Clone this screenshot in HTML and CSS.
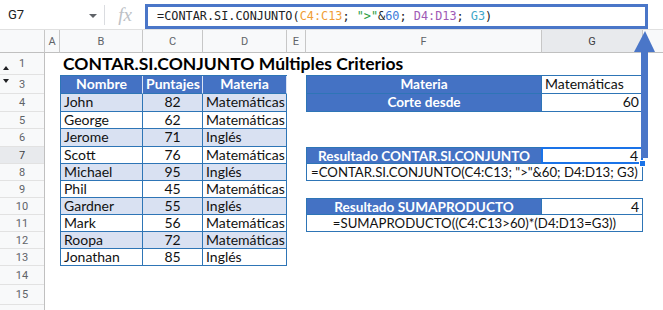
FILE: index.html
```html
<!DOCTYPE html>
<html lang="es">
<head>
    <meta charset="UTF-8">
    <title>CONTAR.SI.CONJUNTO</title>
    <link rel="stylesheet" href="styles.css">
</head>
<body>
<div class="app">
    <div class="toolbar">
        <div class="namebox">
            <span>G7</span>
            <span class="caret"></span>
        </div>
        <div class="fx">fx</div>
        <div class="formula">=CONTAR.SI.CONJUNTO(<span class="f-a">C4:C13</span>; <span class="f-s">"&gt;"</span>&amp;<span class="f-n">60</span>; <span class="f-b">D4:D13</span>; <span class="f-c">G3</span>)</div>
    </div>

    <div class="colheads">
        <div class="ch corner"></div>
        <div class="ch">A</div>
        <div class="ch">B</div>
        <div class="ch">C</div>
        <div class="ch">D</div>
        <div class="ch">E</div>
        <div class="ch">F</div>
        <div class="ch sel">G</div>
        <div class="ch rest"></div>
    </div>

    <div class="body">
        <div class="rownums">
            <div class="rn"><span class="hid up"></span>1</div>
            <div class="rn"><span class="hid down"></span>3</div>
            <div class="rn">4</div>
            <div class="rn">5</div>
            <div class="rn">6</div>
            <div class="rn sel">7</div>
            <div class="rn">8</div>
            <div class="rn">9</div>
            <div class="rn">10</div>
            <div class="rn">11</div>
            <div class="rn">12</div>
            <div class="rn">13</div>
            <div class="rn">14</div>
            <div class="rn">15</div>
            <div class="rn"></div>
        </div>

        <div class="canvas">
            <div class="title">CONTAR.SI.CONJUNTO Múltiples Criterios</div>

            <div class="data">
                <div class="hd">Nombre</div><div class="hd">Puntajes</div><div class="hd">Materia</div>
                <div class="odd">John</div><div class="odd num">82</div><div class="odd">Matemáticas</div>
                <div>George</div><div class="num">62</div><div>Matemáticas</div>
                <div class="odd">Jerome</div><div class="odd num">71</div><div class="odd">Inglés</div>
                <div>Scott</div><div class="num">76</div><div>Matemáticas</div>
                <div class="odd">Michael</div><div class="odd num">95</div><div class="odd">Inglés</div>
                <div>Phil</div><div class="num">45</div><div>Matemáticas</div>
                <div class="odd">Gardner</div><div class="odd num">55</div><div class="odd">Inglés</div>
                <div>Mark</div><div class="num">56</div><div>Matemáticas</div>
                <div class="odd">Roopa</div><div class="odd num">72</div><div class="odd">Matemáticas</div>
                <div>Jonathan</div><div class="num">85</div><div>Inglés</div>
            </div>

            <div class="box lookup">
                <div class="hd">Materia</div><div>Matemáticas</div>
                <div class="hd">Corte desde</div><div class="right">60</div>
            </div>

            <div class="box result1">
                <div class="hd">Resultado CONTAR.SI.CONJUNTO</div><div class="right active">4<span class="handle"></span></div>
                <div class="merged">=CONTAR.SI.CONJUNTO(C4:C13; "&gt;"&amp;60; D4:D13; G3)</div>
            </div>

            <div class="box result2">
                <div class="hd">Resultado SUMAPRODUCTO</div><div class="right">4</div>
                <div class="merged">=SUMAPRODUCTO((C4:C13&gt;60)*(D4:D13=G3))</div>
            </div>
        </div>
    </div>

    <!-- flecha de anotación -->
    <svg class="arrow" width="22" height="128" viewBox="0 0 22 128">
        <polygon points="11,0 21,21 0,21" fill="#4a76c8"/>
        <rect x="7" y="20" width="7" height="107" fill="#4a76c8"/>
    </svg>
</div>
</body>
</html>
```

FILE: styles.css
```css
body{
    margin: 0;
    background: #fff;
}

.app{
    position: relative;
    width: 663px;
    height: 310px;
    overflow: hidden;
    font-family: Lato, "Liberation Sans", sans-serif;
}

/* barra de fórmulas */
.toolbar{
    height: 30px;
    box-sizing: border-box;
    display: flex;
    border-bottom: 1px solid #e0e0e0;
}
.namebox{
    width: 105px;
    box-sizing: border-box;
    display: flex;
    align-items: center;
    justify-content: space-between;
    padding: 0 8px 0 8px;
    font: 13px Roboto, sans-serif;
    color: #202124;
    position: relative;
}
.namebox::after{
    content: "";
    position: absolute;
    right: 0;
    top: 5px;
    height: 20px;
    border-right: 1px solid #dadce0;
}
.caret{
    width: 0;
    height: 0;
    border-left: 4px solid transparent;
    border-right: 4px solid transparent;
    border-top: 4px solid #5f6368;
    margin-top: 2px;
}
.fx{
    width: 40px;
    text-align: center;
    font: italic 19px "Liberation Serif", serif;
    color: #bdc1c6;
    line-height: 29px;
}
.formula{
    align-self: flex-end;
    width: 503px;
    height: 25px;
    box-sizing: border-box;
    border: 3px solid #4a76c8;
    padding-left: 9px;
    font: 11.85px "DejaVu Sans Mono", monospace;
    line-height: 18px;
    color: #202124;
    white-space: nowrap;
}
.f-a{ color: #f09d35; }
.f-s{ color: #2a9d40; }
.f-n{ color: #3c78d8; }
.f-b{ color: #a05ab5; }
.f-c{ color: #3fa7c8; }

/* cabeceras */
.colheads{
    display: grid;
    grid-template-columns: 45px 15px 83px 60px 84px 19px 236px 101px 1fr;
    height: 23px;
}
.ch{
    background: #f8f9fa;
    border-right: 1px solid #c7c7c7;
    border-bottom: 1px solid #c0c0c0;
    font: 11px Roboto, sans-serif;
    color: #5f6368;
    display: flex;
    align-items: center;
    justify-content: center;
}
.ch.sel{
    background: #e8eaed;
    color: #3c4043;
}
.ch.rest{
    border-right: none;
}

.body{
    display: flex;
}
.rownums{
    width: 45px;
    flex: none;
    display: grid;
    grid-template-rows: 22px 19px 18px 17px 18px 17px 17px 17px 17px 17px 17px 17px 19px 20px 20px;
    background: #f8f9fa;
    border-right: 1px solid #c0c0c0;
    box-sizing: border-box;
}
.rn{
    position: relative;
    border-bottom: 1px solid #e2e2e2;
    font: 11px Roboto, sans-serif;
    color: #5f6368;
    display: flex;
    align-items: center;
    justify-content: center;
}
.rn.sel{
    background: #e8eaed;
    color: #3c4043;
}
.hid{
    position: absolute;
    left: 3px;
    width: 0;
    height: 0;
    border-left: 3px solid transparent;
    border-right: 3px solid transparent;
}
.hid.up{
    border-bottom: 4px solid #202124;
    bottom: 4px;
}
.hid.down{
    border-top: 4px solid #202124;
    top: 4px;
}

/* hoja */
.canvas{
    flex: 1;
    display: grid;
    grid-template-columns: 15px 83px 60px 84px 19px 236px 101px 1fr;
    grid-template-rows: 22px 19px 18px 17px 18px 17px 17px 17px 17px 17px 17px 17px 19px 20px 20px;
    font-size: 14px;
    color: #111;
}
.title{
    grid-column: 2 / -1;
    grid-row: 1;
    font-weight: bold;
    font-size: 17.5px;
    color: #000;
    padding-left: 3px;
    white-space: nowrap;
    line-height: 22px;
}

.data{
    grid-column: 2 / 5;
    grid-row: 2 / 13;
    display: grid;
    grid-template-columns: 82px 60px 84px;
    grid-template-rows: 18px 18px 17px 18px repeat(7, 17px);
    border-left: 1px solid #2e75b6;
    border-top: 1px solid #2e75b6;
}
.data > div,
.box > div{
    box-sizing: border-box;
    border-right: 1px solid #2e75b6;
    border-bottom: 1px solid #2e75b6;
    padding: 0 3px;
    line-height: 16px;
    white-space: nowrap;
}
.data .hd,
.box .hd{
    background: #4472c4;
    color: #fff;
    font-weight: bold;
    text-align: center;
}
.data .hd{
    border-right-color: #dbe3f4;
}
.data .hd:last-child{
    border-right-color: #2e75b6;
}
.data .odd{
    background: #d9e1f2;
}
.num{
    text-align: center;
}
.right{
    text-align: right;
}

.box{
    grid-column: 6 / 8;
    display: grid;
    grid-template-columns: 235px 101px;
    grid-template-rows: 18px 17px;
    border-left: 1px solid #2e75b6;
    border-top: 1px solid #2e75b6;
}
.lookup{
    grid-row: 2 / 4;
    grid-template-rows: 18px 18px;
}
.result1{
    grid-row: 6 / 8;
    grid-template-rows: 16px 17px;
}
.result2{
    grid-row: 9 / 11;
    grid-template-rows: 16px 17px;
}
.box .hd{
    font-size: 13.6px;
}
.box .merged{
    grid-column: 1 / 3;
    text-align: center;
    font-size: 13.2px;
}

/* celda activa */
.box .active{
    position: relative;
    border: 2px solid #1a73e8;
    line-height: 13px;
    margin: -1px 0 0 -1px;
}
.handle{
    position: absolute;
    right: -5px;
    bottom: -5px;
    width: 5px;
    height: 5px;
    background: #1a73e8;
    border: 1px solid #fff;
}

.arrow{
    position: absolute;
    left: 634px;
    top: 31px;
}
```
